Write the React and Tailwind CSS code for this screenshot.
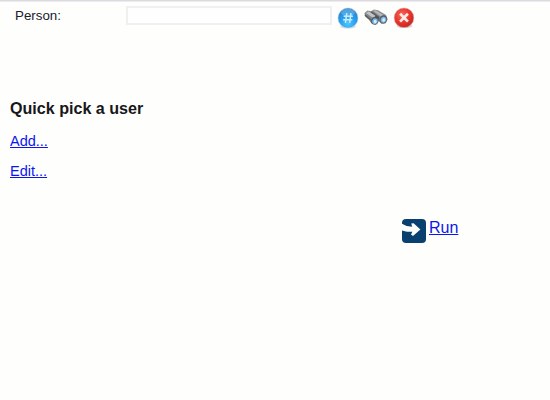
function HashIcon() {
  return (
    <svg className="block h-[22px] w-[22px] shrink-0" viewBox="0 0 22 22">
      <defs>
        <radialGradient id="blueBall" cx="50%" cy="78%" r="70%">
          <stop offset="0" stopColor="#4cc8ff" />
          <stop offset="0.55" stopColor="#289fee" />
          <stop offset="1" stopColor="#2b83cc" />
        </radialGradient>
      </defs>
      <ellipse cx="11" cy="19.5" rx="8" ry="2" fill="#d9dde2" />
      <circle cx="11" cy="11" r="10" fill="url(#blueBall)" stroke="#a9c8e2" strokeWidth="0.5" />
      <ellipse cx="11" cy="5.5" rx="6.8" ry="3.8" fill="#8ccdf5" opacity="0.4" />
      <path d="M9.8 6.2 8.4 15.8M14 6.2l-1.4 9.6M6.7 9.2h9.2M6.1 12.8h9.2" fill="none" stroke="#c9ecff" strokeWidth="1.5" />
    </svg>
  );
}

function BinocularsIcon() {
  return (
    <svg className="block h-[22px] w-[26px] shrink-0" viewBox="0 0 26 22">
      <path d="M1.5 6 4.5 3.6 8 4.2l3-1.6 4 .6 8 4.8 1.6 4.4-1.8 3.8-4.2.7-3.3-3.2-2.8 3.2-4.3-1-2.4-3.2L2 9.5Z" fill="#87888a" />
      <path d="m3 6 2.5-1.4 7.4 4-2.4 2.7Z" fill="#c3c3c4" />
      <path d="m10 3.8 2.5-.5 8.2 4.7-2.7 1.7Z" fill="#b6b7b9" />
      <path d="m2 8 6 5M8.2 4.9l8 5.8" stroke="#5b5e61" strokeWidth="1.5" />
      <path d="m12.4 8.4 3.6 2.3-1 2.2-3.1-2" fill="#454b50" />
      <ellipse cx="11.8" cy="13.8" rx="3.8" ry="4" fill="#555b62" transform="rotate(20 11.8 13.8)" />
      <ellipse cx="12" cy="14.2" rx="2.7" ry="3" fill="#78b9ee" transform="rotate(20 12 14.2)" />
      <ellipse cx="12.2" cy="14.5" rx="1.4" ry="1.8" fill="#d7efff" />
      <ellipse cx="20.3" cy="12.3" rx="3.8" ry="4" fill="#5a5f65" transform="rotate(20 20.3 12.3)" />
      <ellipse cx="20.5" cy="12.7" rx="2.7" ry="3" fill="#78b9ee" transform="rotate(20 20.5 12.7)" />
      <ellipse cx="20.7" cy="13" rx="1.4" ry="1.8" fill="#d7efff" />
    </svg>
  );
}

function ClearIcon() {
  return (
    <svg className="block h-[22px] w-[22px] shrink-0" viewBox="0 0 22 22">
      <defs>
        <radialGradient id="redBall" cx="40%" cy="35%" r="68%">
          <stop offset="0" stopColor="#f4685c" />
          <stop offset="0.6" stopColor="#e8342b" />
          <stop offset="1" stopColor="#c12722" />
        </radialGradient>
      </defs>
      <ellipse cx="11.5" cy="19" rx="8" ry="2" fill="#ddd6d5" />
      <circle cx="11" cy="10.8" r="9.8" fill="url(#redBall)" stroke="#dca09b" strokeWidth="0.6" />
      <path d="m7.1 6.8 7.8 7.8M14.9 6.8l-7.8 7.8" stroke="#ffeae7" strokeWidth="2.7" />
    </svg>
  );
}

function RunIcon() {
  return (
    <svg className="block h-6 w-6 shrink-0" viewBox="0 0 24 24">
      <rect width="24" height="24" rx="4" fill="#09406f" />
      <path d="M0 4.8 4.6 7 10.2 7.7 9.2 4.6 11.6 4.2 18.4 10.4 11 17 9 15.6 10.4 12.7 5 12.8 0 11.4Z" fill="#fefefd" />
    </svg>
  );
}

export default function App() {
  return (
    <main className="h-[400px] w-[550px] overflow-hidden bg-[#fefefd] font-['Liberation_Sans',Arial,sans-serif]">
      <div className="h-0.5 border-t border-[#dcdade] bg-[#ececee]" />
      <div className="flex h-[30px] items-start pl-[15px]">
        <label htmlFor="person" className="w-[111px] pt-1 text-[13.33px] leading-5 text-[#17212c]">Person:</label>
        <input id="person" className="mt-1 h-[19px] w-[206px] border-2 border-[#f0f0f3] bg-[#fefefe] px-1 text-[13px] outline-none" />
        <div className="mt-[5px] ml-[5px] flex">
          <HashIcon />
          <div className="ml-[3.5px]"><BinocularsIcon /></div>
          <div className="ml-[4px]"><ClearIcon /></div>
        </div>
      </div>
      <section className="pt-[66px] pl-[10px]">
        <h2 className="text-[16.1px] leading-5 font-bold text-[#171719]">Quick pick a user</h2>
        <div className="flex flex-col items-start gap-[10px] pt-[13px] text-[14.5px] leading-5 text-[#0b16ee]">
          <a href="#add" className="underline">Add...</a>
          <a href="#edit" className="underline">Edit...</a>
        </div>
      </section>
      <div className="flex pt-[38px] pl-[402px]">
        <RunIcon />
        <a href="#run" className="ml-[3px] -mt-px text-base leading-5 text-[#0b16ee] underline">Run</a>
      </div>
    </main>
  );
}
